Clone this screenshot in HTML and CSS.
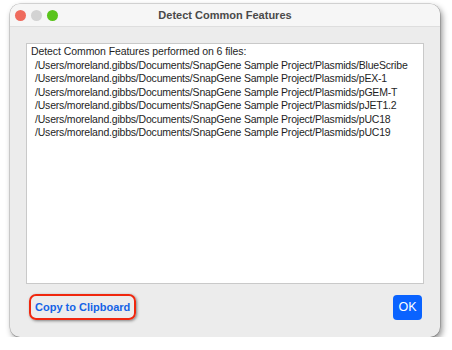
FILE: index.html
```html
<!DOCTYPE html>
<html>
<head>
<link rel="stylesheet" href="styles.css">
</head>
<body>
<div class="window">
  <div class="titlebar">
    <div class="lights">
      <span class="light close"></span>
      <span class="light min"></span>
      <span class="light zoom"></span>
    </div>
    <div class="title">Detect Common Features</div>
  </div>
  <div class="content">
    <div class="log">
      <div class="head">Detect Common Features performed on 6 files:</div>
      <div class="path">/Users/moreland.gibbs/Documents/SnapGene Sample Project/Plasmids/BlueScribe</div>
      <div class="path">/Users/moreland.gibbs/Documents/SnapGene Sample Project/Plasmids/pEX-1</div>
      <div class="path">/Users/moreland.gibbs/Documents/SnapGene Sample Project/Plasmids/pGEM-T</div>
      <div class="path">/Users/moreland.gibbs/Documents/SnapGene Sample Project/Plasmids/pJET1.2</div>
      <div class="path">/Users/moreland.gibbs/Documents/SnapGene Sample Project/Plasmids/pUC18</div>
      <div class="path">/Users/moreland.gibbs/Documents/SnapGene Sample Project/Plasmids/pUC19</div>
    </div>
    <div class="footer">
      <button class="copy">Copy to Clipboard</button>
      <button class="ok">OK</button>
    </div>
  </div>
</div>
</body>
</html>
```

FILE: styles.css
```css
/* mac style sheet dialog */
body {
    margin: 0;
    padding: 4px 0 0 10px;
    background: #fff;
    font-family: 'Liberation Sans', Arial, sans-serif;
}
.window {
    width: 430px;
    height: 333px;
    border-radius: 10px;
    background: #ececec;
    box-shadow: 2px 3px 6px rgba(0, 0, 0, 0.45), 0 0 0 0.5px rgba(0, 0, 0, 0.25);
    overflow: hidden;
    display: flex;
    flex-direction: column;
}
.titlebar {
    height: 22px;
    background: #f6f6f6;
    border-bottom: 1px solid #dedede;
    display: flex;
    align-items: center;
    position: relative;
}
.lights {
    display: flex;
    gap: 5px;
    padding-left: 5px;
}
.light {
    width: 11px;
    height: 11px;
    border-radius: 50%;
}
.close { background: #ef6b5e; }
.min { background: #d3d3d3; }
.zoom { background: #5ac41c; }
.title {
    position: absolute;
    left: 0;
    right: 0;
    text-align: center;
    font-size: 11px;
    font-weight: bold;
    color: #4a4a4a;
}
.content {
    flex: 1;
    display: flex;
    flex-direction: column;
    padding: 16px 16px 0 16px;
}
.log {
    height: 237px;
    background: #fff;
    border: 1px solid #c9c9c9;
    padding: 1px 4px;
    font-size: 10.5px;
    line-height: 13.5px;
    color: #1e1e1e;
    white-space: nowrap;
    overflow: hidden;
}
.head {
    letter-spacing: -0.08px;
}
.path {
    padding-left: 4px;
    letter-spacing: -0.2px;
}
.footer {
    display: flex;
    justify-content: space-between;
    align-items: center;
    padding: 10px 2px 0 3px;
}
.copy {
    font-family: inherit;
    font-size: 11px;
    font-weight: bold;
    color: #1463e6;
    background: none;
    border: 2.5px solid #f0270e;
    border-radius: 7px;
    padding: 5px 4px;
    box-shadow: 1px 1px 3px rgba(0, 0, 0, 0.45);
}
.ok {
    font-family: inherit;
    font-size: 12.5px;
    color: #fff;
    background: #0a63ff;
    border: none;
    border-radius: 4px;
    width: 29px;
    height: 25px;
    padding: 0;
}
```
